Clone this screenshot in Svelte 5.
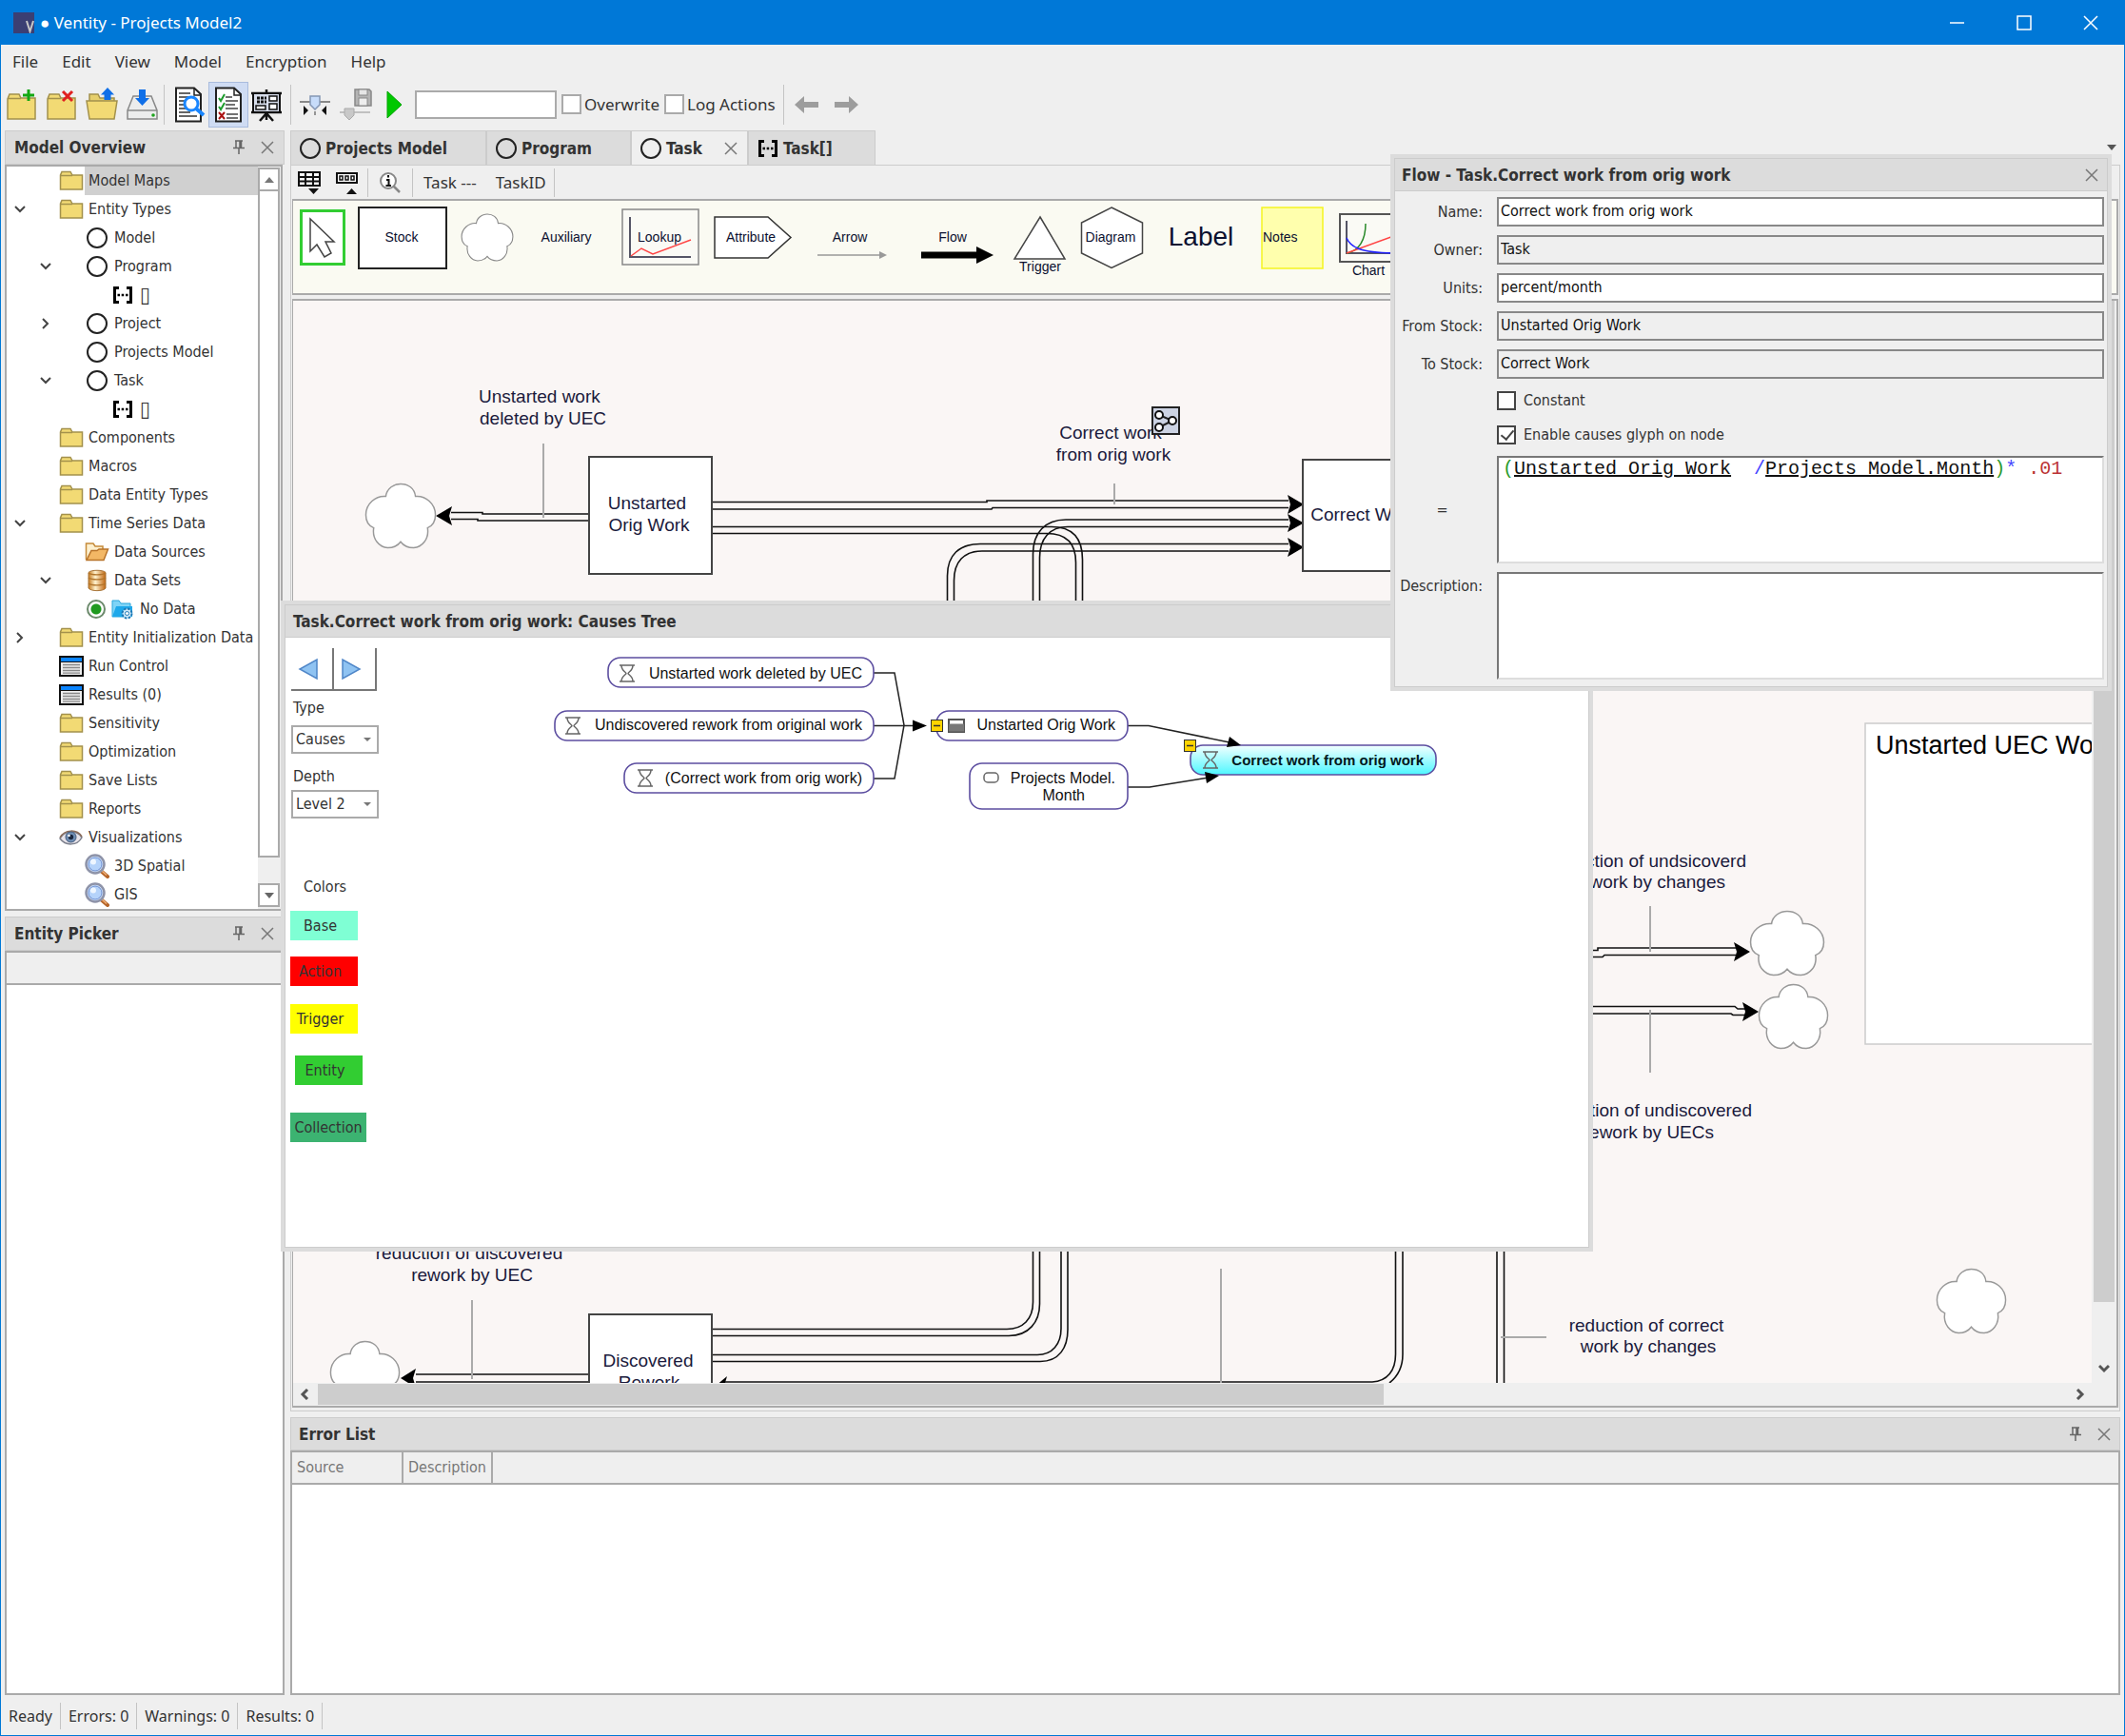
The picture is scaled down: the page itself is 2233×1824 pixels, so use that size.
<script>
  const menus = ['File', 'Edit', 'View', 'Model', 'Encryption', 'Help'];

  const tree = [
    { label: 'Model Maps', icon: 'folder', level: 0, selected: true },
    { label: 'Entity Types', icon: 'folder', level: 0, open: true },
    { label: 'Model', icon: 'circle', level: 1 },
    { label: 'Program', icon: 'circle', level: 1, open: true },
    { label: '▯', icon: 'brackets', level: 2 },
    { label: 'Project', icon: 'circle', level: 1, open: false },
    { label: 'Projects Model', icon: 'circle', level: 1 },
    { label: 'Task', icon: 'circle', level: 1, open: true },
    { label: '▯', icon: 'brackets', level: 2 },
    { label: 'Components', icon: 'folder', level: 0 },
    { label: 'Macros', icon: 'folder', level: 0 },
    { label: 'Data Entity Types', icon: 'folder', level: 0 },
    { label: 'Time Series Data', icon: 'folder', level: 0, open: true },
    { label: 'Data Sources', icon: 'openfolder', level: 1 },
    { label: 'Data Sets', icon: 'database', level: 1, open: true },
    { label: 'No Data', icon: 'bluefolder', level: 2, radio: true },
    { label: 'Entity Initialization Data', icon: 'folder', level: 0, open: false },
    { label: 'Run Control', icon: 'sheet', level: 0 },
    { label: 'Results (0)', icon: 'sheet', level: 0 },
    { label: 'Sensitivity', icon: 'folder', level: 0 },
    { label: 'Optimization', icon: 'folder', level: 0 },
    { label: 'Save Lists', icon: 'folder', level: 0 },
    { label: 'Reports', icon: 'folder', level: 0 },
    { label: 'Visualizations', icon: 'eye', level: 0, open: true },
    { label: '3D Spatial', icon: 'lens', level: 1 },
    { label: 'GIS', icon: 'lens', level: 1 }
  ];

  // Palette cells share one drawing coordinate system; x and w give each cell's slice of it.
  const palette = [
    { id: 'select', x: 308, w: 61 },
    { id: 'stock', x: 369, w: 108 },
    { id: 'cloud', x: 477, w: 78 },
    { id: 'aux', x: 555, w: 88 },
    { id: 'lookup', x: 643, w: 99 },
    { id: 'attribute', x: 742, w: 103 },
    { id: 'arrow', x: 845, w: 105 },
    { id: 'flow', x: 950, w: 105 },
    { id: 'trigger', x: 1055, w: 73 },
    { id: 'diagram', x: 1128, w: 86 },
    { id: 'label', x: 1214, w: 100 },
    { id: 'notes', x: 1314, w: 85 },
    { id: 'chart', x: 1399, w: 100 }
  ];

  const fields = [
    { id: 'name', label: 'Name:', value: 'Correct work from orig work' },
    { id: 'owner', label: 'Owner:', value: 'Task', readonly: true },
    { id: 'units', label: 'Units:', value: 'percent/month' },
    { id: 'from', label: 'From Stock:', value: 'Unstarted Orig Work', readonly: true },
    { id: 'to', label: 'To Stock:', value: 'Correct Work', readonly: true }
  ];

  const status = ['Ready', 'Errors: 0', 'Warnings: 0', 'Results: 0'];
  const clouds = [
    [383, 507, 76, 70], [346, 1408, 75, 70], [1838, 956, 80, 70], [1847, 1033, 75, 70], [2034, 1332, 75, 70]
  ];
  const cloudPath = 'M22 14C23 5 31 .5 38 .5C46 .5 53 5 54 14C65 13 75.500 22 75.500 34C75.500 41 72 46 67 48C69 60 61 69 52 69.500C46 69.500 41 67 38 63C35 67 30 69.500 24 69.500C15 69 7 60 9 48C4 46 .5 41 .5 34C.5 22 11 13 22 14Z';
</script>

{#snippet pin()}
  <button class="mini" aria-label="Auto hide"><svg width="14" height="16" viewBox="0 0 14 16"><path d="M3 1H11M4 1V8M9.500 1V8M8 1V8M1 8.500H13M7 9V15" fill="none" stroke="#666" stroke-width="1.500" /></svg></button>
{/snippet}

{#snippet cross()}
  <button class="mini" aria-label="Close"><svg width="14" height="14" viewBox="0 0 14 14"><path d="M1 1L13 13M13 1L1 13" fill="none" stroke="#777" stroke-width="1.500" /></svg></button>
{/snippet}

{#snippet ring()}
  <svg width="24" height="24" viewBox="0 0 24 24"><circle cx="12" cy="12" r="10" fill="none" stroke="#222" stroke-width="2" /></svg>
{/snippet}

{#snippet brackets()}
  <svg width="24" height="20" viewBox="0 0 24 20"><path d="M8 2.500H3.500V17.500H8M16 2.500H20.500V17.500H16" fill="none" stroke="#000" stroke-width="3" /><path d="M6.500 10H9M10.700 10H13.200M15 10H17.500" stroke="#000" stroke-width="2.500" /></svg>
{/snippet}

{#snippet treeIcon(name)}
  {#if name === 'folder'}
    <svg width="26" height="22" viewBox="0 0 26 22"><path d="M1.500 20V5L3 1.500H12L14 5H24.500V20Z" fill="#f2da74" stroke="#a3914c" stroke-width="1.500" /><path d="M2 5.500H14" stroke="#a3914c" stroke-width="1.500" /></svg>
  {:else if name === 'circle'}
    {@render ring()}
  {:else if name === 'brackets'}
    {@render brackets()}
  {:else if name === 'openfolder'}
    <svg width="26" height="22" viewBox="0 0 26 22"><path d="M1.500 19V2H9L11 5H19V9" fill="#fdf0cf" stroke="#c58a3a" stroke-width="1.500" /><path d="M2 19.500L7 9.500H13L15 8H24.500L20 19.500Z" fill="#f3b765" stroke="#b8732a" stroke-width="1.500" /></svg>
  {:else if name === 'database'}
    <svg width="24" height="24" viewBox="0 0 24 24"><defs><linearGradient id="db"><stop offset="0" stop-color="#c77a1e" /><stop offset=".4" stop-color="#fff3cf" /><stop offset="1" stop-color="#c0650f" /></linearGradient></defs><path d="M3 3.500C5 .5 19 .5 21 3.500V20C19 23.500 5 23.500 3 20Z" fill="url(#db)" stroke="#a8753a" /><path d="M3 9C6 11.500 18 11.500 21 9M3 15C6 17.500 18 17.500 21 15M3 4C6 6.500 18 6.500 21 4" fill="none" stroke="#b1752c" stroke-width="1.300" /></svg>
  {:else if name === 'bluefolder'}
    <svg width="24" height="22" viewBox="0 0 24 22"><path d="M1 19V2H8L10 5H20V19Z" fill="#7fd4f7" stroke="#2aa5dc" /><path d="M1 19L5 8H22V19Z" fill="#1ea8ea" /><circle cx="16.500" cy="15.500" r="5" fill="#cfe9f8" stroke="#1d78b5" stroke-width="2" stroke-dasharray="2.500 1.400" /><circle cx="16.500" cy="15.500" r="2" fill="#fff" stroke="#1d78b5" /></svg>
  {:else if name === 'sheet'}
    <svg width="26" height="22" viewBox="0 0 26 22"><rect x="1" y="1" width="24" height="20" fill="#eee" stroke="#111" stroke-width="2" /><path d="M2 4H24" stroke="#0a84ff" stroke-width="4" /><path d="M1 6.500H25" stroke="#111" /><path d="M4 9.500H22M4 12.500H22M4 15.500H22M4 18.200H22" stroke="#888" stroke-width="1.300" /></svg>
  {:else if name === 'eye'}
    <svg width="26" height="18" viewBox="0 0 26 18"><path d="M1 10C6 1 19 1 24 9C19 18 7 18 1 10Z" fill="#e8e4ea" stroke="#7b7f8c" stroke-width="1.500" /><path d="M1 9C6 0 19 0 24 8" fill="none" stroke="#8a6a58" stroke-width="1.500" /><circle cx="12.500" cy="8.500" r="5.500" fill="#6f8fb5" stroke="#44597a" /><circle cx="12.500" cy="8.500" r="2.700" fill="#1b2740" /><circle cx="10.500" cy="7" r="1.300" fill="#fff" /></svg>
  {:else}
    <svg width="26" height="26" viewBox="0 0 26 26"><path d="M17 18L24 24" stroke="#b5652a" stroke-width="4" stroke-linecap="round" /><path d="M17.500 17.500L23 22.500" stroke="#f0b078" stroke-width="1.500" /><circle cx="11" cy="11" r="9.500" fill="#cfe2fb" stroke="#8e93a8" stroke-width="2.500" /><circle cx="11" cy="11" r="7" fill="#b5d3fa" stroke="#6f8fd0" /><circle cx="9" cy="8.500" r="3" fill="#eef6ff" /></svg>
  {/if}
{/snippet}

{#snippet hourglass(x, y)}
  <path d="M{x} {y}H{x + 16}M{x} {y + 17}H{x + 16}M{x + 2} {y}C{x + 2} {y + 6} {x + 7} {y + 7} {x + 7} {y + 8.5}C{x + 7} {y + 10} {x + 2} {y + 11} {x + 2} {y + 17}M{x + 14} {y}C{x + 14} {y + 6} {x + 9} {y + 7} {x + 9} {y + 8.5}C{x + 9} {y + 10} {x + 14} {y + 11} {x + 14} {y + 17}" fill="none" stroke="#666" stroke-width="1.500" />
{/snippet}

<div class="app">
  <header class="titlebar">
    <svg class="logo" width="22" height="22" viewBox="0 0 22 22"><rect width="22" height="22" fill="#3b3f73" /><path d="M14 9L17.500 20L21 9" fill="none" stroke="#c8c8c8" stroke-width="2" /></svg>
    <h1>● Ventity - Projects Model2</h1>
    <div class="winbtns">
      <button aria-label="Minimize"><svg width="16" height="16" viewBox="0 0 16 16"><path d="M0 8H15" stroke="#fff" stroke-width="1.500" /></svg></button>
      <button aria-label="Maximize"><svg width="16" height="16" viewBox="0 0 16 16"><rect x="1" y="1" width="14" height="14" fill="none" stroke="#fff" stroke-width="1.500" /></svg></button>
      <button aria-label="Close"><svg width="16" height="16" viewBox="0 0 16 16"><path d="M1 1L15 15M15 1L1 15" stroke="#fff" stroke-width="1.500" /></svg></button>
    </div>
  </header>

  <nav class="menubar">
    {#each menus as m}<button>{m}</button>{/each}
  </nav>

  <div class="toolbar">
    <button aria-label="New"><svg width="34" height="38" viewBox="0 0 34 38"><path d="M2 34V13L4 8H14L16 12H31V34Z" fill="#f2da74" stroke="#a3914c" stroke-width="1.500" /><path d="M2 12.500H16" stroke="#a3914c" stroke-width="1.500" /><path d="M24 3V15M18 9H30" stroke="#12a812" stroke-width="3" /></svg></button>
    <button aria-label="Close model"><svg width="34" height="38" viewBox="0 0 34 38"><path d="M2 34V13L4 8H14L16 12H31V34Z" fill="#f2da74" stroke="#a3914c" stroke-width="1.500" /><path d="M2 12.500H16" stroke="#a3914c" stroke-width="1.500" /><path d="M18 5L28 15M28 5L18 15" stroke="#e02020" stroke-width="3" /></svg></button>
    <button aria-label="Open"><svg width="34" height="38" viewBox="0 0 34 38"><path d="M4 18V8H13L15 12H30V18" fill="#e6cf6c" stroke="#a3914c" stroke-width="1.500" /><path d="M1 15H33L30 34H4Z" fill="#f2da74" stroke="#a3914c" stroke-width="1.500" /><path d="M23 1L30 8.500H26.500V14H19.500V8.500H16Z" fill="#0f6fe8" /></svg></button>
    <button aria-label="Save"><svg width="36" height="38" viewBox="0 0 36 38"><path d="M2 25L8 10H27L33 25V34H2Z" fill="#eceded" stroke="#888" stroke-width="1.500" /><path d="M2 25H33" stroke="#888" stroke-width="1.500" /><circle cx="29" cy="30" r="1.800" fill="#1ea41e" /><path d="M14 3H21V12H25L17.500 20L10 12H14Z" fill="#0f6fe8" /></svg></button>
    <i class="sep first"></i>
    <button aria-label="Inspect"><svg width="34" height="38" viewBox="0 0 34 38"><path d="M2 1.500H21L28 8V36.500H2Z" fill="#fff" stroke="#222" stroke-width="2" /><path d="M21 2V9H28" fill="none" stroke="#222" stroke-width="1.500" /><path d="M5 7H17M5 11H15M5 15H12M5 19H10M5 23H12M5 27H17M5 31H24" stroke="#333" stroke-width="1.500" /><circle cx="18" cy="18" r="7" fill="#fff" stroke="#1a86ff" stroke-width="3" /><path d="M23 23L31 30" stroke="#1a86ff" stroke-width="4" /></svg></button>
    <button class="active" aria-label="Check list"><svg width="30" height="38" viewBox="0 0 30 38"><path d="M2 1.500H21L28 8V36.500H2Z" fill="#fff" stroke="#222" stroke-width="2" /><path d="M21 2V9H28" fill="none" stroke="#222" stroke-width="1.500" /><path d="M12 11H19M12 15H25M12 19H22M12 23H25M13 29H25M13 33H25" stroke="#444" stroke-width="1.500" /><path d="M5 12L7 15L11 8M5 21L7 24L11 17" fill="none" stroke="#1d9c2c" stroke-width="2" /><path d="M5 27L11 34M11 27L5 34" stroke="#a11" stroke-width="2" /></svg></button>
    <button aria-label="Presentation"><svg width="34" height="38" viewBox="0 0 34 38"><path d="M1 7H33M1 27H33M17 3V6M17 28V35M17 28L10 36M17 28L24 36" stroke="#111" stroke-width="2.500" /><rect x="3" y="7" width="28" height="20" fill="#d8deec" stroke="#111" stroke-width="2" /><path d="M7 12H17M7 16H17" stroke="#111" stroke-width="3" stroke-dasharray="3 1" /><rect x="20" y="10" width="8" height="5" fill="#fff" stroke="#111" stroke-width="1.500" /><rect x="6" y="20" width="10" height="4" fill="#fff" stroke="#111" stroke-width="1.500" /><rect x="20" y="18" width="8" height="6" fill="#fff" stroke="#111" stroke-width="1.500" /></svg></button>
    <i class="sep"></i>
    <button aria-label="Slider"><svg width="34" height="26" viewBox="0 0 34 26"><path d="M1 10H33" stroke="#888" stroke-width="2" /><path d="M12 4H22V13L17 18L12 13Z" fill="#c7dcfa" stroke="#8496b4" stroke-width="1.500" /><path d="M17 20V24" stroke="#777" stroke-width="1.500" /><path d="M5 14L10 19L5 24ZM29 14L24 19L29 24Z" fill="#111" /></svg></button>
    <button aria-label="Save slider"><svg width="36" height="38" viewBox="0 0 36 38"><path d="M17 3H32L34 5V20H17Z" fill="#b4b4b4" stroke="#888" stroke-width="1.500" /><rect x="21" y="3" width="9" height="6" fill="#e6e6e6" stroke="#888" /><rect x="21" y="12" width="9" height="8" fill="#eee" stroke="#888" /><path d="M1 27H33" stroke="#c0c0c0" stroke-width="2" /><path d="M6 23H16V30L11 35L6 30Z" fill="#c8c8c8" stroke="#aaa" /></svg></button>
    <button class="run" aria-label="Run"><svg width="30" height="32" viewBox="0 0 30 32"><path d="M9 2L24 16L9 30Z" fill="#00c800" stroke="#00a400" /></svg></button>
    <input class="runname" type="text" aria-label="Run name" />
    <label class="tcheck"><input type="checkbox" />Overwrite</label>
    <label class="tcheck"><input type="checkbox" />Log Actions</label>
    <i class="sep"></i>
    <button class="back" aria-label="Back"><svg width="26" height="20" viewBox="0 0 26 20"><path d="M0 10L10 1V7H25V13H10V19Z" fill="#9d9d9d" /></svg></button>
    <button class="fwd" aria-label="Forward"><svg width="26" height="20" viewBox="0 0 26 20"><path d="M25 10L15 1V7H0V13H15V19Z" fill="#9d9d9d" /></svg></button>
  </div>

  <main class="work">
    <aside class="left">
      <section class="panel overview">
        <header class="phead"><h2>Model Overview</h2>{@render pin()}{@render cross()}</header>
        <div class="treebox">
          <ul class="tree" role="tree">
            {#each tree as n}
              <li role="treeitem" aria-selected={!!n.selected} class="lv{n.level}">
                <span class="chev">
                  {#if n.open === true}
                    <svg width="14" height="10" viewBox="0 0 14 10"><path d="M2 2L7 7L12 2" fill="none" stroke="#444" stroke-width="2" /></svg>
                  {:else if n.open === false}
                    <svg width="10" height="14" viewBox="0 0 10 14"><path d="M2 2L7 7L2 12" fill="none" stroke="#444" stroke-width="2" /></svg>
                  {/if}
                </span>
                {#if n.radio}<input class="tradio" type="radio" checked aria-label="Use {n.label}" />{/if}
                <span class="ticon">{@render treeIcon(n.icon)}</span>
                <span class="tlabel" class:sel={n.selected} class:glyph={n.icon === 'brackets'}>{n.label}</span>
              </li>
            {/each}
          </ul>
          <div class="tscroll">
            <button aria-label="Scroll up"><svg width="12" height="8" viewBox="0 0 12 8"><path d="M6 1L11 7H1Z" fill="#777" /></svg></button>
            <div class="tthumb"></div>
            <button aria-label="Scroll down"><svg width="12" height="8" viewBox="0 0 12 8"><path d="M6 7L11 1H1Z" fill="#666" /></svg></button>
          </div>
        </div>
      </section>
      <section class="panel picker">
        <header class="phead"><h2>Entity Picker</h2>{@render pin()}{@render cross()}</header>
        <div class="box"><div class="colhead"></div></div>
      </section>
    </aside>

    <div class="right">
      <div class="tabs">
        <button class="tab t1">{@render ring()}Projects Model</button>
        <button class="tab t2">{@render ring()}Program</button>
        <div class="tab on t3"><button>{@render ring()}Task</button>{@render cross()}</div>
        <button class="tab t4">{@render brackets()}Task[]</button>
        <button class="more" aria-label="More tabs"><svg width="12" height="8" viewBox="0 0 12 8"><path d="M1 1H11L6 7Z" fill="#555" /></svg></button>
      </div>

      <div class="doc">
        <div class="subbar">
          <button aria-label="Table"><svg width="26" height="26" viewBox="0 0 26 26"><path d="M2 2H24V16H2ZM2 7H24M2 11.500H24M9 2V16M17 2V16" fill="#fff" stroke="#111" stroke-width="2" /><path d="M12 19H23L17.500 25Z" fill="#111" /></svg></button>
          <button class="values" aria-label="Values"><svg width="26" height="26" viewBox="0 0 26 26"><rect x="2" y="3" width="21" height="10" fill="#fff" stroke="#111" stroke-width="2" /><path d="M5 6H8V10H5ZM11 6H14V10H11ZM17 6H20V10H17Z" fill="none" stroke="#111" stroke-width="1.500" /><path d="M12 25H23L17.500 19Z" fill="#111" /></svg></button>
          <i class="sep"></i>
          <button aria-label="Info"><svg width="24" height="24" viewBox="0 0 24 24"><circle cx="10" cy="10" r="8" fill="#fff" stroke="#888" stroke-width="2" /><path d="M15.500 15.500L22 22" stroke="#888" stroke-width="2.500" /><path d="M10 4V6.500M8 9H10.500V15M7.500 15H13" fill="none" stroke="#111" stroke-width="2" /></svg></button>
          <i class="sep"></i>
          <span>Task ---</span><span>TaskID</span>
          <i class="sep last"></i>
        </div>

        <div class="palette">
          {#each palette as p}
            <button aria-label={p.id}>
              <svg width={p.w} height="96" viewBox="{p.x} 212 {p.w} 96">
                {#if p.id === 'select'}
                  <rect x="316.500" y="221.500" width="45" height="56" fill="#fff" stroke="#32cd32" stroke-width="3" />
                  <path d="M326 230V264L333 257L341 270L348 266L342 254H351Z" fill="#fff" stroke="#444" stroke-width="1.500" />
                {:else if p.id === 'stock'}
                  <rect x="377" y="218" width="92" height="64" fill="#fff" stroke="#222" stroke-width="2" /><text x="422" y="254" class="mid">Stock</text>
                {:else if p.id === 'cloud'}
                  <svg x="484" y="224" width="56" height="51" viewBox="-1 -1 78 72" preserveAspectRatio="none"><path d={cloudPath} fill="#fff" stroke="#888" stroke-width="1.500" /></svg>
                {:else if p.id === 'aux'}
                  <text x="595" y="254" class="mid">Auxiliary</text>
                {:else if p.id === 'lookup'}
                  <rect x="654" y="220" width="80" height="58" fill="#fafaf5" stroke="#888" stroke-width="1.500" /><path d="M662 228V270H726" fill="none" stroke="#556" stroke-width="2" /><path d="M663 269L674 261L686 267L726 252" fill="none" stroke="#f44" stroke-width="1.500" /><text x="693" y="254" class="mid">Lookup</text>
                {:else if p.id === 'attribute'}
                  <path d="M751 228H807L831 249.500L807 271H751Z" fill="#fff" stroke="#333" stroke-width="1.500" /><text x="789" y="254" class="mid">Attribute</text>
                {:else if p.id === 'arrow'}
                  <text x="893" y="254" class="mid">Arrow</text><path d="M859 268H925" stroke="#999" stroke-width="1.500" /><path d="M924 264L932 268L924 272Z" fill="#999" />
                {:else if p.id === 'flow'}
                  <text x="1001" y="254" class="mid">Flow</text><path d="M968 268H1028" stroke="#000" stroke-width="7" /><path d="M1026 259L1044 268L1026 277Z" fill="#000" />
                {:else if p.id === 'trigger'}
                  <path d="M1093 228L1119 272H1066Z" fill="#fff" stroke="#444" stroke-width="1.500" /><text x="1093" y="285" class="mid">Trigger</text>
                {:else if p.id === 'diagram'}
                  <path d="M1168 218L1200.500 234V266L1168 281.500L1136.500 266V234Z" fill="#fff" stroke="#444" stroke-width="1.500" /><text x="1167" y="254" class="mid">Diagram</text>
                {:else if p.id === 'label'}
                  <text x="1262" y="258" class="mid big">Label</text>
                {:else if p.id === 'notes'}
                  <rect x="1326" y="218" width="64" height="64" fill="#ffffad" stroke="#f5f520" stroke-width="1.500" /><text x="1327" y="254">Notes</text>
                {:else}
                  <rect x="1408" y="225" width="80" height="50" fill="#fafaf5" stroke="#555" stroke-width="2" /><path d="M1415 232V266H1488" fill="none" stroke="#556" stroke-width="2" /><path d="M1415 266C1428 264 1435 252 1435 235" fill="none" stroke="#2a8a2a" stroke-width="1.500" /><path d="M1415 266L1470 246" stroke="#f44" stroke-width="1.500" /><path d="M1415 250C1420 262 1435 266 1470 266" fill="none" stroke="#22f" stroke-width="1.500" /><text x="1438" y="289" class="mid">Chart</text>
                {/if}
              </svg>
            </button>
          {/each}
        </div>

        <div class="canvasbox">
          <div class="canvas">
            <svg class="diagram" width="100%" height="100%">
              <g transform="translate(-308 -316)">
                <g class="flow">
                  <path d="M474 538.500H507V540H619M474 545.500H502V547H619" />
                  <path d="M748 527.500H1037V526H1354M748 535H1042L1043 533.500H1354" />
                  <path d="M748 553.500H1105C1127 553.500 1137.500 566 1137.500 588V640M748 560.500H1100C1120 560.500 1130.500 571 1130.500 591V640" />
                  <path d="M1354 546H1120C1098 546 1085.500 560 1085.500 582V640M1354 553.500H1122C1103 553.500 1092.500 566 1092.500 586V640" />
                  <path d="M1354 571.500H1030C1008 571.500 995.500 583 995.500 605V640M1354 579H1032C1013 579 1002.500 590 1002.500 610V640" />
                  <path d="M437 1444H619M437 1452H619" />
                  <path d="M748 1396.500H1058C1075 1396.500 1085.500 1386 1085.500 1368V1310M748 1403.500H1060C1081 1403.500 1092.500 1389 1092.500 1370V1310" />
                  <path d="M748 1423.500H1090C1106 1423.500 1115 1412 1115 1396V1310M748 1430.500H1093C1113 1430.500 1122 1416 1122 1397V1310" />
                  <path d="M760 1452H1442C1458 1451 1466.500 1440 1466.500 1423V1310M1460 1453C1469 1446 1474 1436 1474 1423V1310" />
                  <path d="M1573 1310V1460M1580.500 1310V1460" />
                  <path d="M1660 998.500H1679V996H1824M1660 1005.500H1684L1686 1003.500H1824" />
                  <path d="M1660 1057.500H1823L1826 1060H1834M1660 1065H1819L1821 1066.500H1834" />
                </g>
                <g class="head">
                  <path d="M458 542L475 532L472 542L475 552Z" />
                  <path d="M1370 530L1353 520L1356 530L1353 540Z" />
                  <path d="M1370 549.500L1353 540L1356 549.500L1353 559Z" />
                  <path d="M1370 575L1353 565L1356 575L1353 585Z" />
                  <path d="M421 1448L437 1438L434 1448L437 1458Z" />
                  <path d="M752 1456L764 1446L761 1456Z" />
                  <path d="M1839 1000L1822 990L1825 1000L1822 1010Z" />
                  <path d="M1848 1063L1831 1053L1834 1063L1831 1073Z" />
                </g>
                <path class="lead" d="M571 466V544M1171 508V530M496 1366V1449M1283 1333V1460M1734 952V1000M1734 1061V1127M1577 1405H1625" />
                <g class="stock">
                  <rect x="619" y="480" width="129" height="123" /><rect x="1369" y="483" width="129" height="117" /><rect x="619" y="1381" width="129" height="123" />
                </g>
                {#each clouds as [x, y, w, h]}
                  <svg {x} {y} width={w} height={h} viewBox="-1 -1 78 72" preserveAspectRatio="none"><path d={cloudPath} fill="#fff" stroke="#999" stroke-width="1.500" /></svg>
                {/each}
                <rect x="1960" y="760" width="300" height="337" fill="#fff" stroke="#ccc" stroke-width="1.500" />
                <text class="title" x="1971" y="792">Unstarted UEC Work</text>
                <text x="503" y="423">Unstarted work</text><text x="504" y="446">deleted by UEC</text>
                <g class="mid">
                  <text x="680" y="535">Unstarted</text><text x="682" y="558">Orig Work</text>
                  <text x="1167" y="461">Correct work</text><text x="1170" y="484">from orig work</text>
                  <text x="1433" y="547">Correct Work</text>
                  <text x="493" y="1323">reduction of discovered</text><text x="496" y="1346">rework by UEC</text>
                  <text x="681" y="1436">Discovered</text><text x="682" y="1459">Rework</text>
                  <text x="1730" y="1399">reduction of correct</text><text x="1732" y="1421">work by changes</text>
                </g>
                <g class="end">
                  <text x="1835" y="911">reduction of undsicoverd</text><text x="1813" y="933">rework by changes</text>
                  <text x="1841" y="1173">reduction of undiscovered</text><text x="1801" y="1196">rework by UECs</text>
                </g>
                <rect x="1211" y="428" width="28" height="28" fill="#ccd3e3" stroke="#222" stroke-width="2" />
                <path d="M1218 436L1232 442L1218 449" fill="none" stroke="#222" stroke-width="2" />
                <g fill="#fff" stroke="#111" stroke-width="2"><circle cx="1218" cy="436" r="4" /><circle cx="1218" cy="449" r="4" /><circle cx="1232" cy="442" r="4" /></g>
              </g>
            </svg>
          </div>
          <div class="vbar">
            <div class="vthumb"></div>
            <button aria-label="Scroll down"><svg width="12" height="12" viewBox="0 0 12 12"><path d="M1 3L6 8L11 3" fill="none" stroke="#555" stroke-width="3" /></svg></button>
          </div>
          <div class="hbar">
            <button aria-label="Scroll left"><svg width="12" height="12" viewBox="0 0 12 12"><path d="M8 1L3 6L8 11" fill="none" stroke="#555" stroke-width="3" /></svg></button>
            <div class="hthumb"></div>
            <button aria-label="Scroll right"><svg width="12" height="12" viewBox="0 0 12 12"><path d="M4 1L9 6L4 11" fill="none" stroke="#555" stroke-width="3" /></svg></button>
          </div>
        </div>
      </div>

      <section class="panel errors">
        <header class="phead"><h2>Error List</h2>{@render pin()}{@render cross()}</header>
        <div class="box">
          <table><thead><tr><th class="src">Source</th><th class="desc">Description</th><th></th></tr></thead></table>
        </div>
      </section>
    </div>
  </main>

  <footer class="statusbar">
    {#each status as s}<span>{s}</span>{/each}
  </footer>

  <section class="float causes">
    <header class="phead"><h2>Task.Correct work from orig work: Causes Tree</h2></header>
    <div class="cbody">
      <div class="ctrl">
        <div class="navs">
          <button aria-label="Previous"><svg width="22" height="24" viewBox="0 0 22 24"><path d="M20 2V22L2 12Z" fill="#8fc3f2" stroke="#4f86c8" stroke-width="1.500" /></svg></button>
          <button aria-label="Next"><svg width="22" height="24" viewBox="0 0 22 24"><path d="M2 2V22L20 12Z" fill="#8fc3f2" stroke="#4f86c8" stroke-width="1.500" /></svg></button>
        </div>
        <label for="ctype">Type</label>
        <div class="sel1"><select id="ctype"><option>Causes</option></select></div>
        <label for="cdepth" class="dl">Depth</label>
        <div class="sel1"><select id="cdepth"><option>Level 2</option></select></div>
        <p class="ctitle">Colors</p>
        <button class="sw base">Base</button>
        <button class="sw action">Action</button>
        <button class="sw trigger">Trigger</button>
        <button class="sw entity">Entity</button>
        <button class="sw coll">Collection</button>
      </div>
      <svg class="ctree" width="100%" height="100%">
        <defs><linearGradient id="cy" x2="0" y2="1"><stop offset="0" stop-color="#f4ffff" /><stop offset="1" stop-color="#4df7ff" /></linearGradient></defs>
        <g transform="translate(-419 -670)">
          <g fill="none" stroke="#222" stroke-width="1.500">
            <path d="M918 707H940L950 762M918 762.500H962M918 818H940L950 762M950 762.500H962" />
            <path d="M1185 762.500H1207L1292 780M1185 827H1208L1270 817" />
          </g>
          <g class="node">
            <rect x="639" y="691" width="279" height="31" rx="13" /><rect x="583" y="747" width="335" height="31" rx="13" /><rect x="656" y="802" width="262" height="31" rx="13" />
            <rect x="984" y="747" width="201" height="31" rx="13" /><rect x="1019" y="802" width="166" height="48" rx="13" />
            <rect x="1251" y="783" width="258" height="31" rx="13" fill="url(#cy)" />
          </g>
          <g fill="#000"><path d="M974 762.500L959 756.500V768.500Z" /><path d="M1304 783L1292 774L1289 785Z" /><path d="M1281 815L1266 811L1268 823Z" /></g>
          {@render hourglass(651, 699)}
          {@render hourglass(594, 754)}
          {@render hourglass(670, 809)}
          {@render hourglass(1264, 790)}
          <rect x="997" y="756" width="16" height="13" fill="#fff" stroke="#555" stroke-width="2" /><path d="M997 764.500H1013" stroke="#777" stroke-width="8" />
          <rect x="1034" y="812" width="15" height="10" rx="4" fill="#fff" stroke="#666" stroke-width="1.500" />
          <g fill="#ffd400" stroke="#333"><rect x="978.500" y="756.500" width="12" height="12" /><rect x="1244.500" y="777.500" width="12" height="12" /></g>
          <path d="M981 762.500H988M1247 783.500H1254" stroke="#333" stroke-width="1.500" />
          <g class="end">
            <text x="906" y="713">Unstarted work deleted by UEC</text><text x="906" y="767">Undiscovered rework from original work</text><text x="906" y="823">(Correct work from orig work)</text>
            <text x="1172" y="767">Unstarted Orig Work</text><text x="1172" y="823">Projects Model.</text><text x="1140" y="841">Month</text>
            <text class="strong" x="1496" y="804">Correct work from orig work</text>
          </g>
        </g>
      </svg>
    </div>
  </section>

  <section class="float flowwin">
    <header class="phead"><h2>Flow - Task.Correct work from orig work</h2>{@render cross()}</header>
    <form class="form">
      {#each fields as f}
        <label class="fl" for={f.id}>{f.label}</label>
        <input id={f.id} class="ft" type="text" value={f.value} readonly={f.readonly} />
      {/each}
      <label class="fc"><input type="checkbox" />Constant</label>
      <label class="fc"><input type="checkbox" checked />Enable causes glyph on node</label>
      <span class="eq" id="eq">=</span>
      <div class="area code" role="textbox" tabindex="0" contenteditable="true" aria-labelledby="eq"><span class="par">(</span><u>Unstarted Orig Work</u>{'  '}<span class="op">/</span><u>Projects Model.Month</u><span class="par">)</span><span class="op">*</span> <span class="num">.01</span></div>
      <label class="fl top" for="descr">Description:</label>
      <textarea id="descr" class="area"></textarea>
    </form>
  </section>
</div>

<style>
  :global(body) { margin: 0; }
  .app, .app :global(*) { box-sizing: border-box; }
  .app {
    position: relative;
    display: flex;
    flex-direction: column;
    min-height: 100vh;
    overflow: hidden;
    background: #efefef;
    border: 1px solid #0078d7;
    color: #333;
    font: 16px/20px "DejaVu Sans Condensed", "Noto Sans", sans-serif;
  }
  button, input, select, textarea { font: inherit; color: inherit; }
  button { border: 0; padding: 0; background: none; display: flex; align-items: center; justify-content: center; flex: none; }
  h1, h2, p, ul { margin: 0; padding: 0; font-size: inherit; }
  svg { display: block; flex: none; }

  .titlebar { display: flex; align-items: center; height: 46px; background: #0078d7; color: #fff; padding-left: 13px; gap: 6px; }
  h1 { flex: 1; font: 17px/24px "Noto Sans", sans-serif; }
  .winbtns { display: flex; }
  .winbtns button { width: 70px; height: 46px; }

  .menubar { display: flex; gap: 25px; height: 35px; padding-left: 12px; align-items: center; font: 17px/24px "Noto Sans", sans-serif; }

  .toolbar { display: flex; align-items: center; height: 55px; padding-left: 5px; gap: 8px; font: 17px/24px "Noto Sans", sans-serif; }
  .toolbar .sep { height: 42px; }
  .sep { width: 1px; background: #c4c4c4; flex: none; }
  .toolbar .first { margin: 0 2px 0 -4px; }
  .toolbar .active { width: 42px; height: 48px; margin: 0 -6px; background: #cfdcf3; border: 1px solid #a9bcdd; }
  .toolbar .run { margin: 0 2px 0 -2px; }
  .runname { width: 149px; height: 30px; border: 2px solid #aaa; background: #fff; margin-left: -2px; }
  .tcheck { display: flex; align-items: center; gap: 3px; margin-left: -3px; }
  input[type='checkbox'] { appearance: none; margin: 0; width: 20px; height: 20px; border: 2px solid #aaa; background: #fff; flex: none; }
  .tcheck input { width: 21px; height: 21px; }
  .back { margin-left: 3px; }
  .fwd { margin-left: 8px; }

  .work { display: flex; flex: 1; gap: 6px; padding: 0 4px 4px; }
  .left { width: 294px; display: flex; flex-direction: column; gap: 6px; flex: none; }
  .panel { display: flex; flex-direction: column; }
  .phead { display: flex; align-items: center; height: 36px; padding: 0 10px 0 9px; gap: 16px; background: #dcdcdc; border: 1px solid #ccc; flex: none; }
  h2 { flex: 1; font-size: 17px; font-weight: bold; white-space: nowrap; }
  .mini { width: 14px; height: 20px; }
  .treebox { display: flex; border: 2px solid #aaa; background: #fff; height: 784px; margin-right: 2px; overflow: hidden; }
  .tree { flex: 1; list-style: none; min-width: 0; }
  .tree li { display: flex; align-items: center; height: 30px; }
  .chev { display: flex; justify-content: center; width: 28px; }
  .ticon { display: flex; justify-content: center; width: 26px; margin-left: 27px; }
  .lv1 { padding-left: 27px; }
  .lv2 { padding-left: 54px; }
  .tlabel { flex: 1; padding-left: 5px; white-space: nowrap; line-height: 30px; }
  .glyph { font-size: 22px; }
  .sel { background: #d0d0d0; margin-left: 1px; padding-left: 4px; }
  .tradio { appearance: none; width: 20px; height: 20px; margin: 0 -22px 0 2px; border: 2px solid #6c8a6c; border-radius: 10px; background: radial-gradient(#1f9a1f 0 5px, #fff 6px); }
  .tscroll { width: 24px; display: flex; flex-direction: column; background: #efefef; flex: none; padding: 1px 0 2px; }
  .tscroll button { width: 23px; height: 25px; border: 2px solid #aaa; background: #fff; }
  .tthumb { flex: 1; width: 23px; border: 2px solid #aaa; border-top: 0; background: #fff; margin-bottom: 27px; }
  .picker { flex: 1; }
  .box { flex: 1; border: 2px solid #aaa; background: #fff; }
  .colhead { height: 34px; background: #efefef; border-bottom: 2px solid #aaa; }

  .right { flex: 1; min-width: 0; display: flex; flex-direction: column; }
  .tabs { display: flex; height: 36px; font-size: 17px; font-weight: bold; }
  .tab { display: flex; align-items: center; justify-content: flex-start; gap: 4px; background: #dcdcdc; border: 1px solid #ccc; border-bottom: 0; padding-left: 8px; flex: none; }
  .tab button { gap: 4px; }
  .t1 { width: 206px; }
  .t2 { width: 152px; }
  .t3 { width: 123px; justify-content: space-between; padding-right: 10px; }
  .t4 { width: 134px; }
  .tab.on { background: #efefef; }
  .more { margin-left: auto; padding-right: 3px; }
  .doc { flex: 1; display: flex; flex-direction: column; border: 1px solid #ccc; padding-bottom: 3px; }
  .subbar { display: flex; align-items: center; height: 35px; padding-left: 6px; gap: 11px; font: 17px/24px "Noto Sans", sans-serif; }
  .subbar .sep { height: 30px; }
  .subbar .values { margin: 0 -3px 0 3px; }
  .subbar span + span { margin-left: 9px; }
  .subbar .last { margin-left: -3px; }
  .palette { display: flex; height: 101px; background: #fafaf2; border: 2px solid #aaa; border-left-width: 1px; overflow: hidden; margin: 0 1px; }
  .palette text { font: 14px "Liberation Sans", Arial, sans-serif; fill: #0b1030; }
  .palette .big { font-size: 28px; }
  .mid, .mid text { text-anchor: middle; }
  .end text { text-anchor: end; }
  .canvasbox { flex: 1; display: grid; grid-template-columns: 1fr 26px; grid-template-rows: 1fr 24px; border: 2px solid #aaa; border-left-width: 1px; margin: 4px 1px 0; background: #efefef; }
  .canvas { overflow: hidden; background: #faf6f5; position: relative; min-height: 400px; min-width: 0; }
  .diagram { position: absolute; inset: 0; }
  .diagram text { font: 19px "Liberation Sans", Arial, sans-serif; fill: #1a1a3c; }
  .diagram .title { font-size: 27px; fill: #000; }
  .flow path { fill: none; stroke: #111; stroke-width: 1.6px; }
  .head path { fill: #000; }
  .lead { fill: none; stroke: #aaa; stroke-width: 2px; }
  .stock rect { fill: #fff; stroke: #444; stroke-width: 2px; }
  .vbar { display: flex; flex-direction: column; padding: 0 2px; }
  .vthumb { height: 1052px; background: #cdcdcd; margin-bottom: 64px; }
  .hbar { display: flex; align-items: center; }
  .hbar button { width: 26px; }
  .hthumb { width: 1120px; height: 22px; background: #cdcdcd; margin-right: auto; }

  .errors { height: 292px; margin-top: 6px; flex: none; }
  .errors .phead { height: 35px; padding: 0 9px 0 8px; }
  table { border-collapse: collapse; width: 100%; }
  th { height: 33px; padding: 0 5px; background: #efefef; border-right: 2px solid #aaa; border-bottom: 2px solid #aaa; text-align: left; font-weight: normal; color: #777; }
  th:last-child { border-right: 0; }
  .src { width: 116px; }
  .desc { width: 93px; }

  .statusbar { display: flex; height: 38px; align-items: center; padding: 0 0 2px; font: 16px/28px "Noto Sans", sans-serif; }
  .statusbar span { padding: 0 8px; border-right: 1px solid #c4c4c4; }

  .float { position: absolute; display: flex; flex-direction: column; border: 4px solid #dcdcdc; outline: 1px solid #ccc; outline-offset: -5px; }
  .causes { left: 294px; top: 630px; width: 1379px; height: 684px; background: #fff; }
  .causes .phead { padding: 0 8px; height: 35px; }
  .cbody { flex: 1; display: flex; min-height: 0; }
  .ctrl { width: 120px; flex: none; padding: 11px 0 0 6px; display: flex; flex-direction: column; align-items: flex-start; }
  .ctree { flex: 1; min-width: 0; }
  .ctree text { font: 16px "Liberation Sans", Arial, sans-serif; fill: #111; }
  .ctree .strong { font-size: 15px; font-weight: bold; fill: #001820; }
  .node rect { stroke: #5c4ea0; stroke-width: 1.600px; }
  .node rect:not([fill]) { fill: #fff; }
  .navs { display: flex; margin: 0 0 8px 1px; }
  .navs button { width: 45px; height: 45px; border-right: 2px solid #777; border-bottom: 2px solid #777; padding-right: 8px; }
  .ctrl label { padding-left: 3px; margin-bottom: 8px; }
  .sel1 { position: relative; width: 92px; height: 30px; margin: 0 0 14px 1px; }
  .ctrl .dl { margin-bottom: 4px; }
  .sel1::after { content: ''; position: absolute; right: 8px; top: 13px; border: 4px solid transparent; border-top-color: #777; pointer-events: none; }
  select { appearance: none; width: 100%; height: 30px; border: 2px solid #aaa; border-radius: 0; background: #fff; padding: 0 3px; }
  .ctitle { margin: 48px 0 15px 14px; }
  .sw { width: 71px; height: 31px; margin-bottom: 17px; padding-right: 8px; }
  .base { background: #7fffd4; }
  .action { background: #f00; margin-bottom: 19px; }
  .trigger { background: #ff0; margin-bottom: 23px; }
  .entity { background: #32cd32; margin: 0 0 29px 5px; }
  .coll { background: #3cb371; width: 80px; padding: 0; }

  .flowwin { left: 1460px; top: 161px; width: 758px; height: 564px; background: #efefef; }
  .flowwin .phead { padding: 0 9px 0 7px; height: 35px; }
  .form { display: grid; grid-template-columns: 93px 1fr; column-gap: 15px; row-gap: 9px; padding: 6px 4px 8px 0; align-items: center; }
  .fl { text-align: right; white-space: nowrap; }
  .ft { height: 31px; width: 100%; border: 2px solid #888; background: #fff; padding: 0 2px 2px; color: #111; }
  .ft[readonly] { background: #efefef; }
  .fc { grid-column: 2; display: flex; align-items: center; gap: 8px; height: 27px; }
  .fc input { border-color: #444; }
  .fc input:checked { position: relative; }
  .fc input:checked::after { content: ''; position: absolute; left: 5px; top: 0; width: 6px; height: 11px; border: solid #444; border-width: 0 2px 2px 0; transform: rotate(40deg); }
  .eq { text-align: center; padding-left: 8px; }
  .area { height: 113px; width: 100%; border: 2px solid #777; border-right-color: #ddd; border-bottom-color: #ddd; background: #fff; resize: none; }
  .code { font: 20px/24px "Liberation Mono", "Courier New", monospace; white-space: pre; padding: 0 4px; color: #111; outline: none; }
  .par { color: #2a9a2a; }
  .op { color: #44f; }
  .num { color: #b33; }
  .top { align-self: start; padding-top: 5px; }
</style>
